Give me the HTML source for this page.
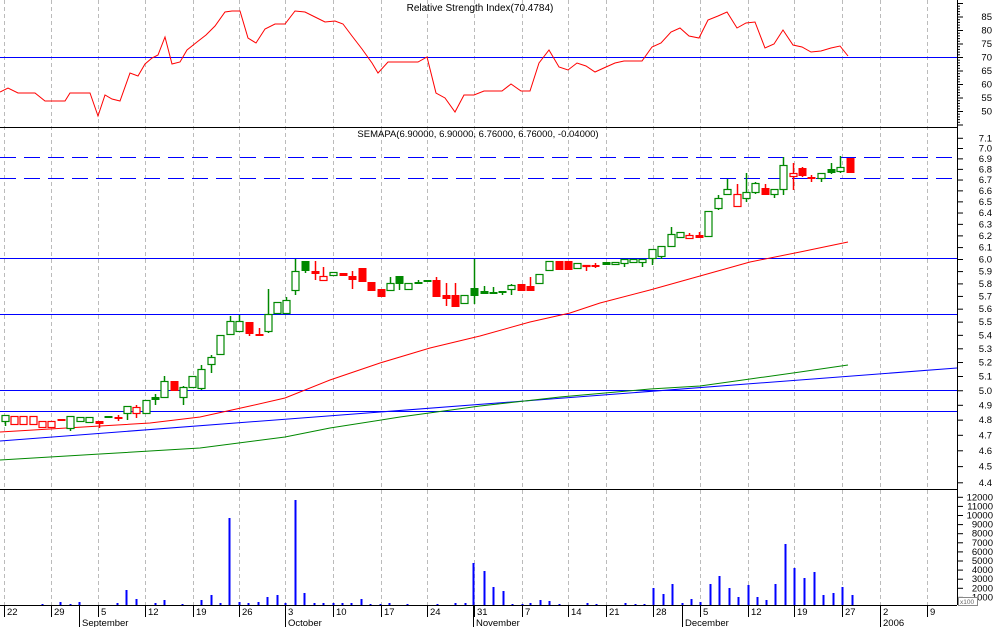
<!DOCTYPE html>
<html><head><meta charset="utf-8"><style>
html,body{margin:0;padding:0;background:#fff;}
svg{display:block;font-family:"Liberation Sans",sans-serif;}
</style></head><body>
<svg id="s" width="994" height="627" viewBox="0 0 994 627" xmlns="http://www.w3.org/2000/svg">
<rect width="994" height="627" fill="#fff"/>
<g id="grid" stroke="#bbb" stroke-dasharray="4,3" stroke-width="1"></g>
<g id="hl"></g>
<g id="ma" fill="none" stroke-width="1"></g>
<g id="cd"></g>
<g id="vol" stroke="#00f" stroke-width="2"></g>
<g id="ax" font-size="10" fill="#000"></g>
<text x="480" y="11" font-size="10" text-anchor="middle">Relative Strength Index(70.4784)</text>
<text x="478" y="137" font-size="9.5" text-anchor="middle">SEMAPA(6.90000, 6.90000, 6.76000, 6.76000, -0.04000)</text>
</svg>
<script>
var NS="http://www.w3.org/2000/svg";
function el(p,t,a,txt){var e=document.createElementNS(NS,t);for(var k in a)e.setAttribute(k,a[k]);if(txt!=null)e.textContent=txt;document.getElementById(p).appendChild(e);return e;}
var gx=[4,51,98,145,193,239,285,333,381,427,474,522,568,606,653,700,748,794,842,880,927];
var gl=["22","29","5","12","19","26","3","10","17","24","31","7","14","21","28","5","12","19","27","2","9"];
gx.forEach(function(x){el("grid","line",{x1:x+.5,y1:0,x2:x+.5,y2:605});});
// horizontal lines
[[57,"#00f"],[258,"#00f"],[314,"#00f"],[390,"#00f"],[411,"#00f"]].forEach(function(h){el("hl","line",{x1:0,y1:h[0]+.5,x2:957,y2:h[0]+.5,stroke:h[1]});});
[157,178].forEach(function(y){el("hl","line",{x1:0,y1:y+.5,x2:957,y2:y+.5,stroke:"#00f","stroke-dasharray":"16,8"});});
el("hl","line",{x1:0,y1:127.5,x2:957,y2:127.5,stroke:"#000"});
el("hl","line",{x1:0,y1:489.5,x2:957,y2:489.5,stroke:"#000"});
el("hl","line",{x1:957.5,y1:0,x2:957.5,y2:605,stroke:"#000"});
// MAs
function pl(pts,c,w){el("ma","polyline",{points:pts.map(function(p){return p.join(",")}).join(" "),stroke:c,"stroke-width":w||1});}
pl([[0,432],[100,426],[150,423],[200,417],[250,406],[285,398],[330,380],[380,363],[430,348],[480,336],[530,322],[570,313],[600,303],[650,290],[700,276],[750,262],[800,252],[848,242]],"#f00");
pl([[0,441],[957,368]],"#00f");
pl([[0,460],[100,454],[200,448],[285,437],[330,428],[400,417],[480,406],[560,397],[650,389],[700,386],[750,379],[800,372],[848,365]],"#080");
// RSI
pl([[0,92],[8,88],[18,93],[35,93],[45,101],[65,101],[70,93],[90,93],[98,116],[105,95],[112,99],[120,101],[130,73],[138,76],[145,64],[152,58],[158,55],[165,37],[172,64],[180,62],[187,50],[197,42],[206,35],[215,26],[225,12],[232,11],[240,11],[248,38],[256,43],[265,29],[275,24],[285,24],[295,11],[305,12],[315,17],[325,22],[335,21],[343,24],[352,36],[362,49],[372,63],[378,73],[388,62],[398,62],[408,62],[418,62],[427,57],[436,93],[445,98],[455,112],[464,95],[474,95],[484,91],[493,91],[502,91],[511,84],[521,91],[530,91],[539,63],[549,50],[559,67],[568,70],[577,63],[586,66],[595,72],[606,67],[615,63],[624,61],[633,61],[642,61],[652,47],[661,43],[671,32],[680,28],[689,36],[699,38],[708,20],[718,16],[727,12],[737,28],[746,23],[755,22],[765,48],[774,44],[783,30],[793,45],[802,47],[811,52],[821,51],[831,48],[840,46],[848,56]],"#f00");
// candles [x, bodyTop, bodyBot, wickTop, wickBot, type]
var C=[[5,415,421,415,425,'g'],[14,416,424,416,424,'r'],[23,416,424,416,424,'r'],[33,416,424,416,424,'r'],[42,421,427,421,427,'r'],[51,421,427,421,427,'r'],[61,419,420,419,420,'R'],[70,416,428,416,430,'g'],[80,417,421,417,421,'g'],[89,417,422,417,422,'g'],[99,421,423,421,427,'R'],[108,416,417,416,417,'G'],[118,417,418,415,420,'R'],[127,406,413,406,419,'g'],[136,407,413,405,417,'r'],[146,400,413,400,413,'g'],[155,397,399,394,404,'G'],[164,381,397,376,397,'g'],[174,381,390,381,390,'R'],[183,387,397,386,404,'g'],[192,376,387,376,387,'g'],[201,369,388,365,389,'g'],[211,357,364,355,372,'g'],[220,335,354,335,354,'g'],[230,321,334,316,334,'g'],[239,321,331,315,331,'g'],[249,322,333,322,335,'R'],[259,334,335,328,335,'R'],[268,314,331,289,332,'g'],[277,302,313,302,313,'g'],[286,300,313,297,313,'g'],[295,271,290,259,294,'g'],[305,261,270,261,272,'G'],[315,271,273,261,279,'R'],[323,276,280,267,280,'r'],[333,272,275,272,275,'g'],[343,273,275,273,275,'R'],[352,276,279,271,288,'R'],[362,268,281,268,281,'R'],[371,282,290,282,290,'R'],[381,289,296,289,296,'R'],[390,283,290,277,290,'g'],[399,276,283,276,289,'G'],[408,283,289,283,289,'g'],[418,282,283,280,283,'G'],[427,280,281,280,281,'G'],[436,280,296,277,296,'R'],[446,295,298,283,305,'R'],[455,295,306,283,306,'R'],[464,295,303,295,303,'g'],[474,288,295,259,303,'G'],[484,291,293,286,293,'G'],[493,292,293,287,293,'G'],[502,291,292,291,294,'G'],[511,285,289,284,294,'g'],[521,284,290,284,290,'R'],[530,286,290,277,290,'R'],[539,274,283,274,283,'g'],[549,261,270,261,270,'g'],[559,261,269,261,269,'R'],[568,261,269,261,269,'R'],[577,263,268,263,268,'g'],[586,265,266,265,270,'r'],[595,265,266,263,267,'R'],[606,262,264,262,264,'G'],[615,262,264,262,264,'g'],[624,259,263,259,266,'g'],[633,259,262,259,262,'g'],[642,259,262,259,266,'g'],[652,249,258,249,264,'g'],[661,246,256,246,258,'g'],[671,234,246,227,246,'g'],[680,232,237,232,237,'g'],[689,235,238,233,238,'r'],[699,235,237,232,237,'R'],[708,211,236,211,236,'g'],[718,198,208,195,209,'g'],[727,189,194,179,194,'g'],[737,194,206,184,206,'r'],[746,192,198,173,201,'g'],[755,183,192,182,193,'g'],[765,188,194,184,194,'R'],[774,189,194,189,197,'g'],[783,165,189,157,194,'g'],[793,173,176,163,189,'r'],[802,168,175,167,176,'R'],[811,177,178,175,181,'R'],[821,173,178,173,181,'g'],[831,169,172,163,173,'G'],[840,167,171,156,172,'g'],[850,158,172,158,172,'R']];
C.forEach(function(c){var col=(c[5]=='g'||c[5]=='G')?"#080":"#f00";var fill=(c[5]=='G'||c[5]=='R');
el("cd","line",{x1:c[0]+.5,y1:c[3],x2:c[0]+.5,y2:c[4]+1,stroke:col,"stroke-width":1.5});
var h=Math.max(c[2]-c[1],1);
if(fill)el("cd","rect",{x:c[0]-3.5,y:c[1],width:8,height:h+1,fill:col});
else el("cd","rect",{x:c[0]-3,y:c[1]+.5,width:7,height:h,fill:"#fff",stroke:col,"stroke-width":1.2});});
// volume
var V=[[42,604],[60,602],[70,604],[79,602],[117,603],[126,590],[136,599],[155,603],[164,600],[182,604],[201,600],[211,595],[220,603],[229,518],[239,602],[248,603],[258,602],[267,597],[277,595],[285,603],[295,500],[304,593],[314,603],[323,603],[333,603],[342,603],[351,603],[361,599],[370,604],[380,604],[389,603],[407,604],[437,604],[455,603],[465,603],[473,563],[484,571],[493,587],[503,591],[512,604],[522,604],[530,603],[540,600],[549,601],[559,604],[587,603],[596,604],[625,603],[635,604],[644,604],[653,588],[663,594],[672,584],[682,603],[691,599],[700,602],[710,584],[719,576],[729,588],[738,597],[748,585],[757,597],[766,600],[775,584],[785,544],[794,568],[804,578],[814,572],[823,595],[833,593],[842,587],[852,595]];
V.forEach(function(v){el("vol","line",{x1:v[0]+.5,y1:v[1],x2:v[0]+.5,y2:605});});
// axes
el("ax","line",{x1:0,y1:605.5,x2:957,y2:605.5,stroke:"#000"});
gx.forEach(function(x,i){el("ax","line",{x1:x+.5,y1:605,x2:x+.5,y2:617,stroke:"#000"});el("ax","text",{x:x+3,y:615,"font-size":"9.5"},gl[i]);});
[[79,"September"],[285,"October"],[473,"November"],[682,"December"],[880,"2006"]].forEach(function(m){el("ax","line",{x1:m[0]+.5,y1:605,x2:m[0]+.5,y2:627,stroke:"#000"});el("ax","text",{x:m[0]+3,y:626,"font-size":"9.5"},m[1]);});
// RSI axis
for(var v=45;v<=90;v++){var y=57+(70-v)*2.7;if(y<0||y>127)continue;el("ax","line",{x1:957,y1:y+.5,x2:(v%5==0)?963:960,y2:y+.5,stroke:"#000"});if(v%5==0&&v<=85&&v>=50)el("ax","text",{x:992,y:y+3.5,"text-anchor":"end","font-size":"9.5"},String(v));}
// price axis (log)
for(var k=43;k<=72;k++){var p=k/10;var y=148+720*Math.log(7/p);if(y<128||y>488)continue;el("ax","line",{x1:957,y1:y+.5,x2:963,y2:y+.5,stroke:"#000"});if(k>=44&&k<=71)el("ax","text",{x:992,y:y+3.5,"text-anchor":"end","font-size":"9.5"},p.toFixed(1));}
// volume axis
for(var k=1;k<=12;k++){var y=606-9.1*k;el("ax","line",{x1:957,y1:y+.5,x2:963,y2:y+.5,stroke:"#000"});el("ax","text",{x:993,y:y+3.5,"text-anchor":"end","font-size":"9.5"},String(k*1000));}
el("ax","rect",{x:958.5,y:597.5,width:19,height:8,fill:"#fff",stroke:"#888"});
el("ax","text",{x:960,y:604,"font-size":"6.5",fill:"#666"},"x100");
</script>
</body></html>
